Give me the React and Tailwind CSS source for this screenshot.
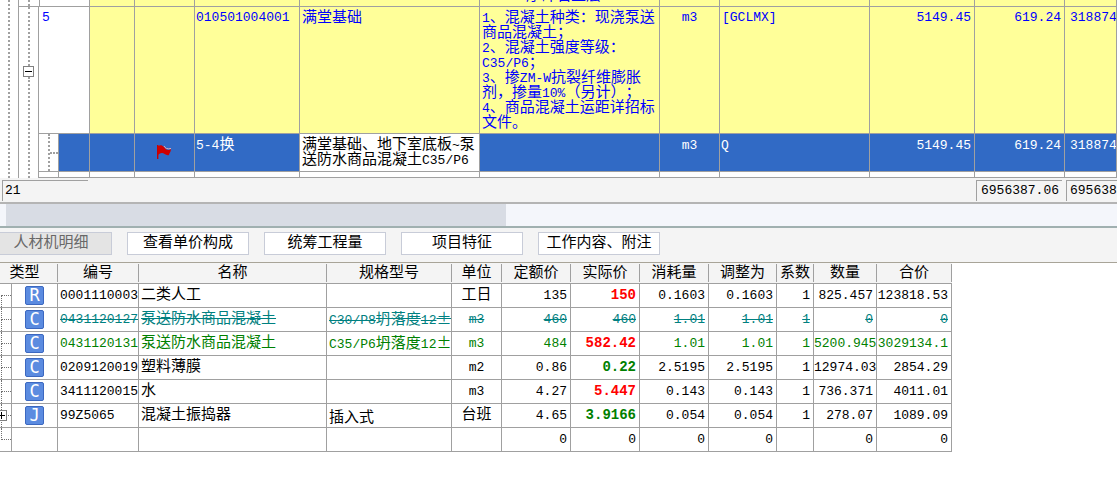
import clsx from 'clsx'

const latin = "font-['Liberation_Mono',monospace] text-[13px]"
const latinLarge = "font-['Liberation_Mono',monospace] text-[14px]"

// Chinese runs are set at 15px, latin runs and digits one step smaller
const Mixed = ({ text, className = latin, strike }) =>
  text
    .split(/([\x20-\x7e]+)/)
    .map((part, index) => ({ part, isLatin: index % 2 === 1 }))
    .filter(({ part }) => part)
    .map(({ part, isLatin }, index) => (
      <span key={index} className={clsx(isLatin && className, strike && 'line-through')}>
        {part}
      </span>
    ))

const Flag = () => (
  <svg width="16" height="16" viewBox="0 0 16 16" role="img" aria-label="flag">
    <path d="M0 1h1.4v14H0z" fill="#c80000" />
    <path d="M1 2 C3 1 5 1 7 3 C9 6 11 7 14 5 C14 8 12 9 12 11 C9 12 7 9 5 9 C3 9 2 10 1 11 Z" fill="#d00000" />
    <path d="M7 2 C8 4 10 5.500 14 4.500" fill="none" stroke="#d8b0c0" />
  </svg>
)

const Toggle = ({ open, className }) => (
  <button
    type="button"
    aria-label={open ? 'Collapse' : 'Expand'}
    className={clsx('block w-[11px] h-[11px] bg-white border border-[#808080]', className)}
  >
    <svg width="9" height="9" viewBox="0 0 9 9" className="block">
      <path d={open ? 'M1 4h7v1h-7z' : 'M1 4h7v1h-7z M4 1h1v7h-1z'} fill="#000" />
    </svg>
  </button>
)

const features = [
  '1、混凝土种类：现浇泵送',
  '商品混凝土；',
  '2、混凝土强度等级：',
  'C35/P6；',
  '3、掺ZM-W抗裂纤维膨胀',
  '剂，掺量10%（另计）；',
  '4、商品混凝土运距详招标',
  '文件。',
]

const cell = 'border-r border-b border-[#a0a0a0] overflow-hidden whitespace-nowrap align-top'
const dots = 'border-dotted border-[#a0a0a0]'

const BillTable = () => (
  <table className="w-full table-fixed border-separate border-spacing-0 text-[15px] leading-[15px] bg-white">
    <colgroup>
      <col className="w-[19px]" />
      <col className="w-[20px]" />
      <col className="w-[20px]" />
      <col className="w-[31px]" />
      <col className="w-[45px]" />
      <col className="w-[60px]" />
      <col className="w-[105px]" />
      <col className="w-[180px]" />
      <col className="w-[180px]" />
      <col className="w-[60px]" />
      <col className="w-[150px]" />
      <col className="w-[105px]" />
      <col className="w-[90px]" />
      <col />
    </colgroup>
    <tbody>
      <tr className="h-[7px] bg-[#ffff99] text-[#0000ff]">
        <td rowSpan={4} className="h-px border-r border-[#a0a0a0] bg-white p-0 pl-[8px]">
          <div className={clsx('h-full border-l-2', dots)} />
        </td>
        <td className="h-px border-b border-[#a0a0a0] bg-white p-0 pl-[9px]">
          <div className={clsx('h-full border-l-2', dots)} />
        </td>
        <td colSpan={2} className={clsx(cell, 'border-l bg-white')} />
        <td className={cell} />
        <td className={cell} />
        <td className={cell} />
        <td className={cell} />
        <td className={cell}>
          <div className="flex h-[4px] items-end justify-center overflow-hidden pr-[12px]">
            <span>序砕石垫层</span>
          </div>
        </td>
        <td className={cell} />
        <td className={cell} />
        <td className={cell} />
        <td className={cell} />
        <td className={cell} />
      </tr>
      <tr className="h-[127px] bg-[#ffff99] text-[#0000ff]">
        <td rowSpan={3} className="h-px border-r border-[#a0a0a0] bg-white p-0">
          <div className="flex h-full flex-col items-center">
            <div className={clsx('h-[59px] border-l-2', dots)} />
            <Toggle open />
            <div className={clsx('grow border-l-2', dots)} />
          </div>
        </td>
        <td colSpan={2} className={clsx(cell, latin, 'bg-white px-[3px] pt-[3px]')}>
          5
        </td>
        <td className={cell} />
        <td className={cell} />
        <td className={clsx(cell, latin, 'px-px pt-[3px]')}>010501004001</td>
        <td className={clsx(cell, 'px-[2px] pt-[4px]')}>满堂基础</td>
        <td className={clsx(cell, 'px-[2px] pt-[4px]')}>
          {features.map((line) => (
            <p key={line} className="h-[15px]">
              <Mixed text={line} />
            </p>
          ))}
        </td>
        <td className={clsx(cell, latin, 'pt-[3px] text-center')}>m3</td>
        <td className={clsx(cell, latin, 'px-[2px] pt-[3px]')}>[GCLMX]</td>
        <td className={clsx(cell, latin, 'px-[3px] pt-[3px] text-right')}>5149.45</td>
        <td className={clsx(cell, latin, 'px-[3px] pt-[3px] text-right')}>619.24</td>
        <td className={clsx(cell, latin, 'pl-[5px] pt-[3px]')}>318874</td>
      </tr>
      <tr className="h-[38px] bg-[#316ac5] text-white">
        <td className="h-px border-r border-b border-[#a0a0a0] bg-white p-0">
          <div className="flex h-full items-center pl-[9px]">
            <div className={clsx('h-full border-l-2', dots)} />
            <div className={clsx('grow border-t-2', dots)} />
          </div>
        </td>
        <td className={cell} />
        <td className={cell} />
        <td className={clsx(cell, 'pl-[22px] pt-[10px]')}>
          <Flag />
        </td>
        <td className={clsx(cell, 'px-px pt-[4px]')}>
          <Mixed text="5-4换" />
        </td>
        <td className={clsx(cell, 'bg-white px-[2px] pt-[4px] text-black')}>
          <p className="h-[15px]">
            <Mixed text="满堂基础、地下室底板~泵" />
          </p>
          <p className="h-[15px]">
            <Mixed text="送防水商品混凝土C35/P6" />
          </p>
        </td>
        <td className={cell} />
        <td className={clsx(cell, latin, 'pt-[4px] text-center')}>m3</td>
        <td className={clsx(cell, latin, 'px-px pt-[4px]')}>Q</td>
        <td className={clsx(cell, latin, 'px-[3px] pt-[4px] text-right')}>5149.45</td>
        <td className={clsx(cell, latin, 'px-[3px] pt-[4px] text-right')}>619.24</td>
        <td className={clsx(cell, latin, 'pl-[5px] pt-[4px]')}>318874</td>
      </tr>
      <tr className="h-[6px]">
        {Array.from({ length: 12 }, (_, index) => (
          <td key={index} className={cell} />
        ))}
      </tr>
    </tbody>
  </table>
)

const total = clsx(latin, 'h-[21px] border-t border-l border-[#a0a0a0] leading-[20px] overflow-hidden')

const Totals = () => (
  <div className="flex h-[26px] items-center gap-1 border-b-2 border-[#b4b4b4] bg-[#f4f4f4] pl-[2px]">
    <div className={clsx(total, 'w-[86px] pl-[2px]')}>21</div>
    <div className={clsx(total, 'ml-auto w-[86px] pr-[3px] text-right')}>6956387.06</div>
    <div className={clsx(total, 'w-[51px] pl-[3px]')}>695638</div>
  </div>
)

const tabs = ['人材机明细', '查看单价构成', '统筹工程量', '项目特征', '工作内容、附注']

const Tabs = () => (
  <nav className="-ml-[10px] flex gap-[15px] pt-[4px] pb-[7px]">
    {tabs.map((tab, index) => (
      <button
        key={tab}
        type="button"
        className={clsx(
          'h-[23px] w-[122px] shrink-0 border border-[#c8ccd8] text-[15px] leading-[21px]',
          index === 0 ? 'bg-[#e4e4e4] text-[#686868]' : 'bg-white text-black'
        )}
      >
        {tab}
      </button>
    ))}
  </nav>
)

const columns = ['编号', '名称', '规格型号', '单位', '定额价', '实际价', '消耗量', '调整为', '系数', '数量', '合价']

const resources = [
  { kind: 'R', values: ['0001110003', '二类人工', '', '工日', '135', '150', '0.1603', '0.1603', '1', '825.457', '123818.53'], price: 'text-[#ff0000]' },
  { kind: 'C', values: ['0431120127', '泵送防水商品混凝土', 'C30/P8坍落度12±', 'm3', '460', '460', '1.01', '1.01', '1', '0', '0'], row: 'text-[#008080]', strike: true },
  { kind: 'C', values: ['0431120131', '泵送防水商品混凝土', 'C35/P6坍落度12±', 'm3', '484', '582.42', '1.01', '1.01', '1', '5200.945', '3029134.1'], row: 'text-[#008000]', price: 'text-[#ff0000]' },
  { kind: 'C', values: ['0209120019', '塑料薄膜', '', 'm2', '0.86', '0.22', '2.5195', '2.5195', '1', '12974.03', '2854.29'], price: 'text-[#008000]' },
  { kind: 'C', values: ['3411120015', '水', '', 'm3', '4.27', '5.447', '0.143', '0.143', '1', '736.371', '4011.01'], price: 'text-[#ff0000]' },
  { kind: 'J', values: ['99Z5065', '混凝土振捣器', '插入式', '台班', '4.65', '3.9166', '0.054', '0.054', '1', '278.07', '1089.09'], price: 'text-[#008000]' },
  { kind: '', values: ['', '', '', '', '0', '0', '0', '0', '', '0', '0'] },
]

const Branch = ({ index, last }) => (
  <div className="relative flex h-[23px] flex-col pl-px">
    <div className={clsx('h-[12px] border-dotted border-[#707070] border-b', index > 0 && 'border-l')} />
    <div className={clsx('grow border-dotted border-[#707070]', !last && 'border-l')} />
    {index === 5 && <Toggle className="absolute top-[6px] -left-[4px]" />}
  </div>
)

const grid = 'border-r border-b border-[#a0a0a0] overflow-hidden whitespace-nowrap p-0'

const ResourceTable = () => (
  <table className="w-[952px] table-fixed border-separate border-spacing-0 text-[15px] leading-[20px]">
    <colgroup>
      <col className="w-[12px]" />
      <col className="w-[46px]" />
      <col className="w-[81px]" />
      <col className="w-[188px]" />
      <col className="w-[125px]" />
      <col className="w-[50px]" />
      <col className="w-[69px]" />
      <col className="w-[69px]" />
      <col className="w-[69px]" />
      <col className="w-[68px]" />
      <col className="w-[37px]" />
      <col className="w-[63px]" />
      <col />
    </colgroup>
    <thead>
      <tr className="h-[21px] bg-[#f4f4f4]">
        <th colSpan={2} className="border-b border-[#a0a0a0] p-0 font-normal">
          <div className="h-[18px] border-r border-[#a0a0a0] pr-[8px] leading-[20px]">类型</div>
        </th>
        {columns.map((name) => (
          <th key={name} className="border-b border-[#a0a0a0] p-0 font-normal">
            <div className="h-[18px] border-r border-[#a0a0a0] leading-[20px]">{name}</div>
          </th>
        ))}
      </tr>
    </thead>
    <tbody>
      {resources.map(({ kind, values, row, price, strike }, index) => (
        <tr key={index} className={clsx('h-[24px]', row)}>
          <td className={grid}>
            <Branch index={index} last={index === resources.length - 1} />
          </td>
          <td className={grid}>
            {kind && (
              <span className="mx-auto flex h-[19px] w-[19px] items-center justify-center rounded-[2px] border border-[#3c68c0] bg-[#5b8be0] font-['DejaVu_Sans_Mono',monospace] text-[17px] leading-[17px] text-white">
                {kind}
              </span>
            )}
          </td>
          {values.map((value, column) => (
            <td
              key={column}
              className={clsx(
                grid,
                column < 3 && 'pl-[2px]',
                column === 2 && "font-['Noto_Sans_CJK_SC',sans-serif]",
                column === 3 && 'text-center',
                column > 3 && 'pr-[3px] text-right',
                column === 5 && price && ['font-bold', price]
              )}
            >
              <Mixed text={value} strike={strike} className={column === 5 && price ? latinLarge : latin} />
            </td>
          ))}
        </tr>
      ))}
    </tbody>
  </table>
)

const App = () => {
  return (
    <div className="min-h-screen w-full overflow-hidden bg-white font-['Liberation_Mono','Noto_Sans_CJK_SC',monospace] text-black [text-spacing-trim:space-all]">
      <BillTable />
      <Totals />
      <div className="flex h-[22px] bg-[#f4f6fb] pl-[6px]">
        <div className="w-[45%] bg-[#d8dce4]" />
      </div>
      <div className="border-t-2 border-b border-t-[#a0b0b0] border-b-[#a8a498] bg-[#f4f4f4]">
        <Tabs />
      </div>
      <ResourceTable />
    </div>
  )
}

export default App
